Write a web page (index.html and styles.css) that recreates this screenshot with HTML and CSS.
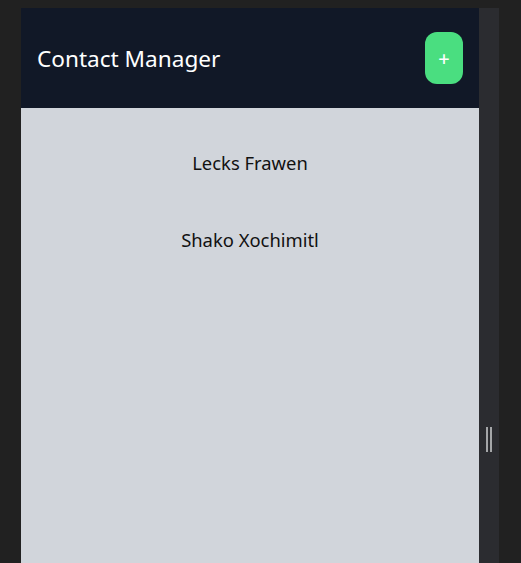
FILE: index.html
```html
<!DOCTYPE html>
<html lang="en">
<head>
<meta charset="utf-8">
<title>Contact Manager</title>
<link rel="stylesheet" href="styles.css">
</head>
<body>
<div class="frame">
  <div class="app">
    <header class="topbar">
      <h1 class="title">Contact Manager</h1>
      <button class="add-btn" type="button">+</button>
    </header>
    <ul class="contacts">
      <li class="contact">Lecks Frawen</li>
      <li class="contact">Shako Xochimitl</li>
    </ul>
  </div>
  <div class="resizer"><span class="grip"></span></div>
</div>
</body>
</html>
```
FILE: styles.css
```css
html, body {
  margin: 0;
  padding: 0;
  height: 100%;
}
body {
  background: #212121;
  font-family: "Noto Sans", "Open Sans", sans-serif;
  overflow: hidden;
}
.frame {
  display: flex;
  height: 100%;
  box-sizing: border-box;
  padding: 8px 0 0 21px;
}
.app {
  width: 458px;
  display: flex;
  flex-direction: column;
  background: #d1d5db;
}
.topbar {
  height: 100px;
  box-sizing: border-box;
  background: #111827;
  display: flex;
  align-items: center;
  justify-content: space-between;
  padding: 0 16px;
}
.title {
  margin: 0;
  color: #ffffff;
  font-size: 22.6px;
  font-weight: 400;
}
.add-btn {
  width: 38px;
  height: 52px;
  border: none;
  border-radius: 12px;
  background: #4ade80;
  color: #ffffff;
  font-family: inherit;
  font-size: 20px;
  font-weight: 500;
  padding: 0;
}
.contacts {
  list-style: none;
  margin: 0;
  padding: 16px 0 0;
}
.contact {
  text-align: center;
  color: #111111;
  font-size: 18.4px;
  line-height: 27px;
  padding: 25px 0;
}
.resizer {
  width: 20px;
  box-sizing: border-box;
  background: #2b2c30;
  display: flex;
  justify-content: center;
  align-items: flex-start;
  padding-top: 419px;
}
.grip {
  width: 2px;
  height: 25px;
  border-left: 2px solid #a4a6a8;
  border-right: 2px solid #a4a6a8;
}
```
